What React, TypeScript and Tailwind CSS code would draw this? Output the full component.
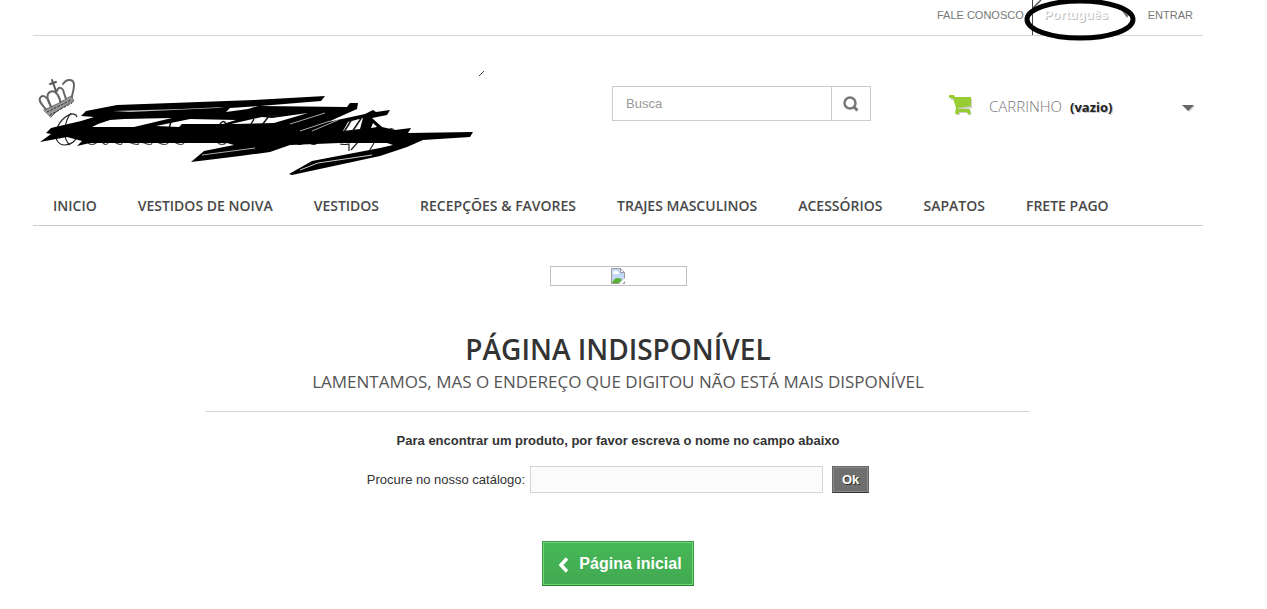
import React from 'react';

const menuItems = [
  'INICIO',
  'VESTIDOS DE NOIVA',
  'VESTIDOS',
  'RECEPÇÕES & FAVORES',
  'TRAJES MASCULINOS',
  'ACESSÓRIOS',
  'SAPATOS',
  'FRETE PAGO',
];

const Logo = () => (
  <svg viewBox="33 66 460 114" className="w-[460px] h-[114px] shrink-0" role="img" aria-label="Logo">
    {/* crown */}
    <g fill="none" stroke="#666" strokeWidth="2" strokeLinecap="round">
      <path d="M48 112C44 106 38 102 40 98C43 93 49 98 51 108" />
      <path d="M52 108C47 101 46 94 50 92C56 89 60 97 61 105" />
      <path d="M57 91C58 86 63 87 64 93L67 102" />
      <path d="M63 84C67 78 74 79 74 85C74 91 72 94 71 101" />
      <path d="M50 84L56 82M52 80L56 91" stroke="#555" />
      <path d="M44 110C52 107 63 101 71 96L74 101C66 105 57 110 51 117Z" fill="#999" stroke="#666" strokeWidth="1" />
      <path d="M47 112L71 100M50 115L72 103" stroke="#333" strokeDasharray="2 2" strokeWidth="1" />
    </g>
    {/* script lettering */}
    <g fill="none" stroke="#222" strokeWidth="1.2">
      <path d="M77 117C75 110 63 116 58 126C53 137 57 145 65 145C74 144 79 138 76 130" />
      <path d="M71 113C64 122 62 139 70 145" />
      <path d="M88 143q4 3 8 0t7 0t5 0t8 0t6 0t9 0t7 0t6 0t8 0t7 0t9 0t8 0t8 0M218 143q4 3 8 0" stroke="#444" />
      <path d="M296 143q4 3 7 0t7 0t7 0t7 0M340 144q5 1 9 0l0 7M358 142l-7 8M374 143l-6 10M388 131q3 -5 7 0" />
    </g>
    {/* scribble over the name */}
    <path
      fill="#000"
      d="M81 116L86 111L117 105L254 100L325 96L321 101L260 106L347 107L350 103L358 103L357 109L348 113L328 122L365 114L373 110L376 112L390 110L387 115L372 118L382 127L395 130L411 128L408 133L473 132L470 137L423 140L407 147L380 156L292 175L289 174L312 161L380 148L393 145L387 143L340 143L290 145L270 152L240 156L191 162L204 151L234 145L227 143L90 143L77 146L82 141L67 137L40 142L51 134L46 133L51 128L81 121L94 117Z"
    />
    <g fill="#fff">
      <path d="M92 127L98 124L110 120L124 119L172 118L134 127Z" />
      <path d="M156 126L190 119L236 120L223 124L182 124L179 127Z" />
      <path d="M231 124L262 117L272 118L308 113L274 123Z" />
      <path d="M226 112L230 108L258 106L248 109Z" />
      <path d="M112 111L180 109L225 107L218 108L130 112Z" fill="#bbb" />
      <path d="M348 122L363 118L360 129L343 131Z" />
      <path d="M373 123L377 127L371 128Z" />
    </g>
    <g stroke="#fff" strokeWidth="1" fill="none">
      <path d="M300 170L318 163L372 155" stroke="#ccc" />
      <path d="M202 155L255 148M290 124L325 113M300 131L330 121M312 131L338 120" stroke="#aaa" />
    </g>
    <g fill="none" stroke="#111" strokeWidth="1.5">
      <path d="M169 128L171 122M220 124q4 -5 6 0M250 126l4 -7M262 125l7 -9h10" />
      <path d="M352 119L344 132M362 117L352 132" />
    </g>
    <path d="M479 76L484 71" stroke="#444" strokeWidth="1" />
  </svg>
);

const TopBar = () => (
  <div className="flex h-9 justify-end border-b border-[#d6d4d4] pr-[10px] text-[11px] leading-[30px] text-[#777]">
    <a href="#contact" className="pr-2">FALE CONOSCO</a>
    <div className="relative w-[108px] border-l border-[#444] pl-[11px]">
      <button type="button" className="text-[13px] font-bold leading-[30px] text-white [text-shadow:1px_1px_#bbb]">
        Português
      </button>
      <svg viewBox="0 0 114 42" className="absolute -left-[10px] -top-px h-[42px] w-[114px] max-w-none" aria-hidden="true">
        <path d="M10 9L18 1" stroke="#555" strokeWidth="1.5" />
        <path d="M99 12h9l-4 7z" fill="#777" />
        <ellipse cx="57" cy="20.500" rx="53" ry="18.500" fill="none" stroke="#000" strokeWidth="5" />
      </svg>
    </div>
    <a href="#login" className="pl-2">ENTRAR</a>
  </div>
);

const Header = () => (
  <header>
    <TopBar />
    <div className="flex items-start pt-[30px]">
      <Logo />
      <form className="ml-[119px] mt-5 flex h-[35px] w-[259px] border border-[#ccc]" onSubmit={(e) => e.preventDefault()}>
        <input
          type="search"
          aria-label="Busca"
          placeholder="Busca"
          className="min-w-0 flex-1 px-[13px] text-[13px] outline-none placeholder:text-[#999]"
        />
        <button type="submit" aria-label="Buscar" className="flex w-[39px] items-center justify-center border-l border-[#ccc]">
          <svg viewBox="0 0 16 16" className="h-4 w-4" fill="none" stroke="#777">
            <circle cx="7" cy="7" r="5.500" strokeWidth="2.500" />
            <path d="M10.500 10.500L14.500 14.500" strokeWidth="3" />
          </svg>
        </button>
      </form>
      <button type="button" className="ml-[77px] mt-7 flex flex-1 items-start pr-2 text-left leading-6">
        <svg viewBox="0 0 25 22" className="h-[22px] w-[25px]" aria-hidden="true">
          <path d="M3 3h4l1 2h16v9l-13 2v1h12v4h-3v-2h-8v2H9v-3l1-3L6 6H3z" fill="#ccc" />
          <path d="M1 1h5l1 2h16v9l-13 2v1h12v2l1 2-2 2-2-2v-1h-8v1l-2 2-2-2 1-5L5 4H1z" fill="#9c3" />
        </svg>
        <span className="ml-4 font-['Open_Sans'] text-[15px] font-light text-[#777]">CARRINHO</span>
        <span className="ml-2 pt-px font-['Open_Sans'] text-[13px] font-bold text-[#222] [text-shadow:1px_1px_#ccc]">(vazio)</span>
        <svg viewBox="0 0 13 8" className="ml-auto mt-[10px] h-2 w-[13px]" aria-hidden="true">
          <path d="M2 2h11l-6 6z" fill="#ccc" />
          <path d="M0 1h12L6 7z" fill="#666" />
        </svg>
      </button>
    </div>
    <nav className="mt-[6px] border-b border-[#ccc]">
      <ul className="flex h-[39px] gap-[41px] whitespace-nowrap pl-5 font-['Open_Sans'] text-[14px] font-semibold leading-10 text-[#484848]">
        {menuItems.map((item) => (
          <li key={item}>
            <a href="#menu">{item}</a>
          </li>
        ))}
      </ul>
    </nav>
  </header>
);

const PageNotFound = () => (
  <main className="flex flex-col items-center pt-10">
    <div role="img" aria-label="Imagem indisponível" className="flex h-5 w-[137px] justify-center border border-[#c0c0c0] pt-px">
      <svg viewBox="0 0 14 16" className="h-4 w-[14px]">
        <path d="M.5.500h9l4 4v11H.5z" fill="#c5d8f7" stroke="#999" />
        <path d="M9.500.500v4h4z" fill="#fff" stroke="#999" />
        <path d="M2 5q0-2 2-2q2-1 3 1q1 0 1 2H2z" fill="#fff" />
        <path d="M1 15q2-5 6-5q3 0 4 2l-3 3z" fill="#5ab031" />
        <path d="M8 16l6-6v3l-3 3z" fill="#fff" />
      </svg>
    </div>
    <h1 className="mt-[42px] font-['Open_Sans'] text-[28px] font-semibold leading-[42px] text-[#333]">PÁGINA INDISPONÍVEL</h1>
    <h3 className="font-['Open_Sans'] text-[17px] leading-6 text-[#555]">
      LAMENTAMOS, MAS O ENDEREÇO QUE DIGITOU NÃO ESTÁ MAIS DISPONÍVEL
    </h3>
    <div className="mt-[17px] w-full max-w-[824px] border-t border-[#d6d4d4]" />
    <h4 className="mt-5 text-[13px] font-bold leading-[18px] text-[#333]">
      Para encontrar um produto, por favor escreva o nome no campo abaixo
    </h4>
    <form className="mt-4 flex items-center text-[13px] text-[#333]" onSubmit={(e) => e.preventDefault()}>
      <label htmlFor="search_query">Procure no nosso catálogo:</label>
      <input
        id="search_query"
        type="text"
        className="ml-[5px] h-[27px] w-[293px] border border-[#d6d4d4] bg-[#fbfbfb] px-2"
      />
      <button
        type="submit"
        className="ml-[9px] h-[27px] w-[37px] border border-[#666] border-b-[#333] bg-[#6f6f6f] font-bold text-white shadow-[inset_0_0_0_1px_#8b8b8b] [text-shadow:1px_1px_#333]"
      >
        Ok
      </button>
    </form>
    <a
      href="#home"
      className="mt-12 flex h-[45px] items-center border border-[#399a49] border-b-[#247f32] bg-linear-to-b from-[#46b857] to-[#42a951] pl-[15px] pr-[11px] text-[16px] font-bold text-white shadow-[inset_0_0_0_1px_#74d578]"
    >
      <svg viewBox="0 0 10 16" className="mr-[11px] mt-[2px] h-4 w-[10px]" fill="none" stroke="#fff" strokeWidth="3.500" aria-hidden="true">
        <path d="M9 1.500L3 8l6 6.500" />
      </svg>
      Página inicial
    </a>
  </main>
);

const App = () => {
  return (
    <div className="bg-white pb-6 pl-[33px] pr-16 font-['Liberation_Sans',Arial,sans-serif]">
      <div className="mx-auto max-w-[1170px]">
        <Header />
        <PageNotFound />
      </div>
    </div>
  );
};

export default App;
